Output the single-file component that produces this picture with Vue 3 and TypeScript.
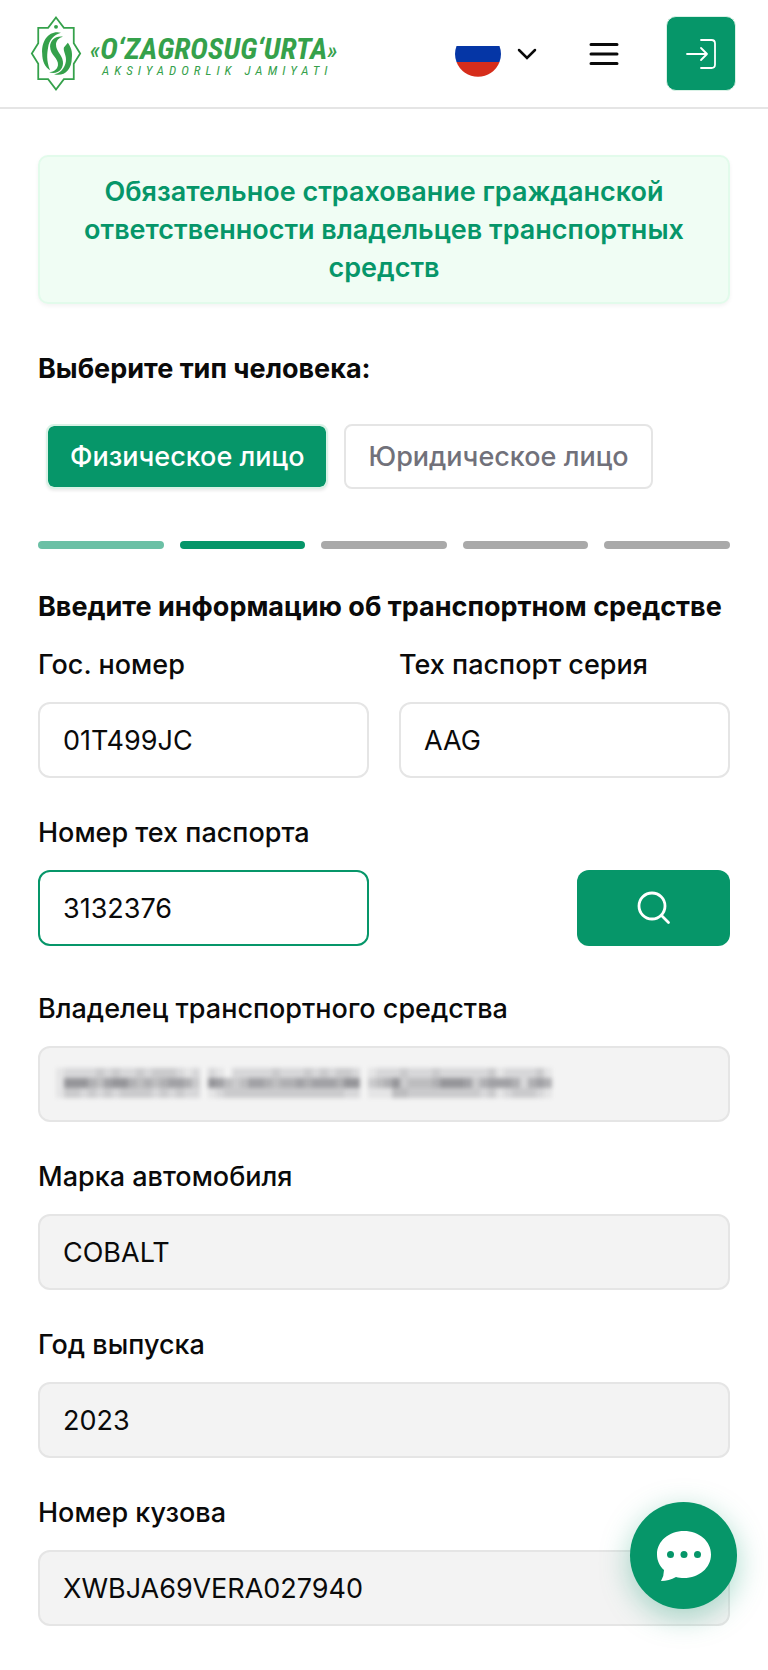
<script setup lang="ts">
import { ref } from 'vue'

interface Field {
  id: string
  label: string
  value: string
}

const personTypes = ['Физическое лицо', 'Юридическое лицо']
const personType = ref(0)
const steps = ['done', 'current', 'todo', 'todo', 'todo']

const plate = ref('01T499JC')
const series = ref('AAG')
const passport = ref('3132376')

const details: Field[] = [
  { id: 'model', label: 'Марка автомобиля', value: 'COBALT' },
  { id: 'year', label: 'Год выпуска', value: '2023' },
  { id: 'body', label: 'Номер кузова', value: 'XWBJA69VERA027940' },
]

// Darkness of each cell in the mosaic that hides the owner's name, 0 to 9.
const mosaicRows = [
  '12222323223233321202102222232223232332012223222322222231222231',
  '17775467754545665307643466545565666577034573444577763566652565',
  '13323232333323232201233333333333333322011144333333333231233321',
]
const mosaic = mosaicRows.flatMap((row, y) =>
  [...row].map((level, x) => ({ x, y, opacity: Number(level) / 13 })),
)
</script>

<template>
  <div class="page">
    <header class="header">
      <a class="logo" href="#" aria-label="O‘ZAGROSUG‘URTA">
        <svg class="emblem" viewBox="0 0 52 76" fill="none">
          <path d="M26 1.500L34 12H44V27.500L50.500 38L44 48.500V64H34L26 74.500L18 64H8V48.500L1.500 38L8 27.500V12H18Z" stroke="#35a14b" stroke-width="1.800" />
          <circle cx="26" cy="11" r="2" fill="#35a14b" />
          <path d="M31 17C20 14 11 24 12 38C12 46 15 52 20 55C16 45 17 38 18 32C19 24 24 19 31 17Z" fill="#35a14b" />
          <path d="M33 21C25 20 20 25 20 31C20 40 29 43 28 50C27 55 23 57 19 57C28 60 34 53 33 46C32 39 26 36 26 29C26 25 29 22 33 21Z" fill="#35a14b" />
          <path d="M38 27L34 32C33 36 37 40 36 46C35 53 30 58 24 59C34 62 42 54 42 43C43 36 41 31 38 27Z" fill="#35a14b" />
        </svg>
        <svg class="wordmark" viewBox="0 0 248 50">
          <text class="brand" x="0" y="30"><tspan class="quote">«</tspan>O‘ZAGROSUG‘URTA<tspan class="quote">»</tspan></text>
          <text class="tagline" x="12" y="46">AKSIYADORLIK JAMIYATI</text>
        </svg>
      </a>
      <nav class="actions">
        <button class="language" type="button" aria-label="Русский">
          <svg class="flag" viewBox="0 0 46 46">
            <path d="M1.500 15H44.500A23 23 0 0 1 44.500 31H1.500A23 23 0 0 1 1.500 15Z" fill="#0536a6" />
            <path d="M1.500 31H44.500A23 23 0 0 1 1.500 31Z" fill="#d62d1b" />
          </svg>
          <svg class="chevron" viewBox="0 0 20 12" fill="none" stroke="#0a0a0a" stroke-width="2.500">
            <path d="M2 2L10 10L18 2" stroke-linecap="round" />
          </svg>
        </button>
        <button class="menu" type="button" aria-label="Меню">
          <svg viewBox="0 0 30 24" stroke="#0a0a0a" stroke-width="3" stroke-linecap="round">
            <path d="M2 2.500H28M2 12H28M2 21.500H28" />
          </svg>
        </button>
        <button class="login" type="button" aria-label="Войти">
          <svg viewBox="0 0 30 30" fill="none" stroke="#fff" stroke-width="1.800" stroke-linecap="round" stroke-linejoin="round">
            <path d="M15 1H25.500Q29 1 29 4.500V25.500Q29 29 25.500 29H15M1 15H21M15 9L21 15L15 21" />
          </svg>
        </button>
      </nav>
    </header>

    <main class="content">
      <h1 class="banner">Обязательное страхование гражданской ответственности владельцев транспортных средств</h1>

      <h2 class="heading">Выберите тип человека:</h2>
      <div class="types">
        <button
          v-for="(name, i) in personTypes"
          :key="name"
          type="button"
          class="type"
          :class="{ active: personType === i }"
          :aria-pressed="personType === i"
          @click="personType = i"
        >{{ name }}</button>
      </div>

      <div class="steps">
        <span v-for="(state, i) in steps" :key="i" class="step" :class="state"></span>
      </div>

      <h2 class="heading">Введите информацию об транспортном средстве</h2>
      <form class="form" @submit.prevent>
        <div class="row">
          <div class="field">
            <label for="plate">Гос. номер</label>
            <input id="plate" v-model="plate" type="text" />
          </div>
          <div class="field">
            <label for="series">Тех паспорт серия</label>
            <input id="series" v-model="series" type="text" />
          </div>
        </div>
        <div class="row last">
          <div class="field">
            <label for="passport">Номер тех паспорта</label>
            <input id="passport" v-model="passport" class="focused" type="text" />
          </div>
          <button class="search" type="submit" aria-label="Поиск">
            <svg viewBox="0 0 34 34" fill="none" stroke="#fff" stroke-width="2.800" stroke-linecap="round">
              <circle cx="15" cy="15" r="13" />
              <path d="M24.500 24.500L31.500 31.500" />
            </svg>
          </button>
        </div>
        <div class="field">
          <label for="owner">Владелец транспортного средства</label>
          <div class="masked">
            <input id="owner" type="text" disabled />
            <svg class="mosaic" viewBox="0 0 496 30">
              <rect v-for="(c, i) in mosaic" :key="i" :x="c.x * 8" :y="c.y * 10" width="8" height="10" fill="#44444c" :fill-opacity="c.opacity" />
            </svg>
          </div>
        </div>
        <div v-for="f in details" :key="f.id" class="field">
          <label :for="f.id">{{ f.label }}</label>
          <input :id="f.id" type="text" :value="f.value" disabled />
        </div>
      </form>
    </main>

    <button class="chat" type="button" aria-label="Чат">
      <svg viewBox="0 0 54 50">
        <path d="M27 0C42 0 54 10 54 23.500C54 37 42 47 27 47C24 47 21.500 46.700 19 46Q12 50 4 50Q7 45 7 39C2.500 35 0 29.500 0 23.500C0 10 12 0 27 0Z" fill="#fff" />
        <g fill="#069669">
          <circle cx="13.500" cy="23.500" r="3.500" />
          <circle cx="27" cy="23.500" r="3.500" />
          <circle cx="40.500" cy="23.500" r="3.500" />
        </g>
      </svg>
    </button>
  </div>
</template>

<style>
body {
  margin: 0;
  background: #fff;
}
</style>

<style scoped>
.page {
  font-family: Inter, "Liberation Sans", sans-serif;
  font-size: 27px;
  line-height: 38px;
  color: #0a0a0a;
}

.page * {
  box-sizing: border-box;
}

button,
input {
  font: inherit;
  color: inherit;
}

button {
  padding: 0;
  border: 0;
  background: none;
  cursor: pointer;
}

svg {
  display: block;
}

.header {
  display: flex;
  align-items: center;
  justify-content: space-between;
  padding: 16px 32px 16px 30px;
  border-bottom: 2px solid #e5e5e5;
}

.logo {
  display: flex;
  align-items: center;
  gap: 8px;
}

.emblem {
  width: 52px;
  height: 75px;
}

.wordmark {
  width: 248px;
  height: 50px;
  fill: #35a14b;
  overflow: visible;
}

.brand {
  font: italic 700 30px "Roboto Condensed", Roboto, sans-serif;
}

.quote {
  font-size: 24px;
  font-weight: 500;
}

.tagline {
  font: italic 400 13px "Roboto Condensed", Roboto, sans-serif;
  letter-spacing: 5px;
}

.actions {
  display: flex;
  align-items: center;
}

.language {
  display: flex;
  align-items: center;
  gap: 16px;
}

.flag {
  width: 46px;
  height: 46px;
}

.chevron {
  width: 20px;
  height: 12px;
}

.menu {
  margin: 0 47px 0 52px;
}

.menu svg {
  width: 30px;
  height: 24px;
}

.login {
  display: grid;
  place-items: center;
  width: 70px;
  height: 75px;
  border: 1px solid #d9f2e6;
  border-radius: 10px;
  background: #069669;
}

.login svg {
  width: 30px;
  height: 30px;
}

.content {
  padding: 46px 38px 43px;
}

.banner {
  margin: 0 0 46px;
  padding: 16px 40px 15px;
  border: 2px solid #e2fbeb;
  border-radius: 10px;
  background: #f0fdf4;
  box-shadow: 0 2px 4px rgba(0, 0, 0, 0.05);
  color: #069669;
  font-size: 27px;
  font-weight: 600;
  line-height: 38px;
  text-align: center;
}

.heading {
  margin: 0;
  font-size: 27px;
  font-weight: 700;
  line-height: 38px;
}

.types {
  display: flex;
  gap: 16px;
  margin: 36px 8px 52px;
}

.type {
  height: 65px;
  padding: 0 22px;
  border: 2px solid #e5e5e5;
  border-radius: 8px;
  color: #71717a;
  font-weight: 500;
}

.type.active {
  border-color: #d9f2e6;
  background: #069669;
  background-clip: padding-box;
  box-shadow: 0 2px 3px rgba(0, 0, 0, 0.08);
  color: #fff;
}

.steps {
  display: grid;
  grid-template-columns: repeat(5, 1fr);
  gap: 16px;
  margin-bottom: 39px;
}

.step {
  height: 8px;
  border-radius: 4px;
  background: #a9a9a9;
}

.step.done {
  background: #6bc0a5;
}

.step.current {
  background: #069669;
}

.form {
  display: grid;
  gap: 36px;
  margin-top: 20px;
}

.row {
  display: grid;
  grid-template-columns: 1fr 1fr;
  align-items: end;
  gap: 30px;
}

.row.last {
  margin-bottom: 8px;
}

.field {
  display: grid;
  gap: 18px;
}

.field label {
  font-weight: 500;
}

.field input {
  width: 100%;
  height: 76px;
  padding: 0 23px;
  border: 2px solid #e5e5e5;
  border-radius: 12px;
  background: #fff;
  outline: none;
}

.field input.focused {
  border-color: #069669;
}

.field input:disabled {
  background: #f3f3f3;
  color: #0a0a0a;
  opacity: 1;
}

.search {
  display: grid;
  place-items: center;
  justify-self: end;
  width: 153px;
  height: 76px;
  border-radius: 12px;
  background: #069669;
}

.search svg {
  width: 34px;
  height: 34px;
}

.masked {
  position: relative;
}

.mosaic {
  position: absolute;
  top: 22px;
  left: 18px;
  width: 496px;
  height: 30px;
  filter: blur(2px);
}

.chat {
  position: fixed;
  right: 31px;
  bottom: 61px;
  display: grid;
  place-items: center;
  width: 107px;
  height: 107px;
  border-radius: 50%;
  background: #069669;
  box-shadow: 0 8px 30px rgba(6, 150, 105, 0.35);
}

.chat svg {
  width: 54px;
  height: 50px;
}
</style>
